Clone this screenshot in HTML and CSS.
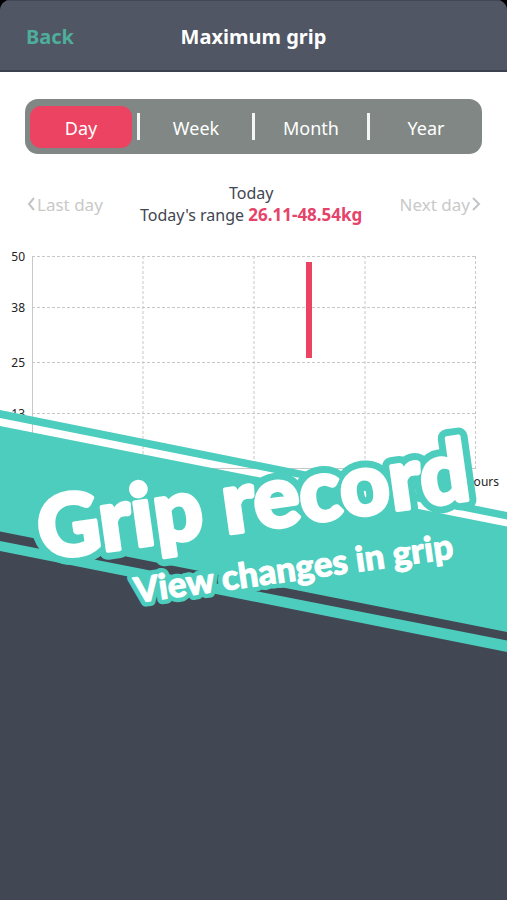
FILE: index.html
```html
<!DOCTYPE html>
<html lang="en">
<head>
<meta charset="utf-8">
<meta name="viewport" content="width=device-width, initial-scale=1">
<title>Maximum grip</title>
<link rel="stylesheet" href="styles.css">
</head>
<body>
<div class="app">
  <header class="topbar">
    <button class="back" type="button">Back</button>
    <h1 class="title">Maximum grip</h1>
  </header>
  <main class="panel">
    <nav class="tabs" aria-label="Period">
      <button class="tab active" type="button">Day</button>
      <span class="sep"></span>
      <button class="tab" type="button">Week</button>
      <span class="sep"></span>
      <button class="tab" type="button">Month</button>
      <span class="sep"></span>
      <button class="tab" type="button">Year</button>
    </nav>
    <section class="range">
      <button class="step" type="button"><svg class="chev" viewBox="0 0 10 14"><path d="M8 1 3 7l5 6"/></svg>Last day</button>
      <p class="summary">Today<br>Today's range <strong>26.11-48.54kg</strong></p>
      <button class="step" type="button">Next day<svg class="chev" viewBox="0 0 10 14"><path d="M2 1l6 6-6 6"/></svg></button>
    </section>
    <svg class="chart" viewBox="0 0 507 300" role="img" aria-label="Grip range by hour">
      <g class="grid">
        <path d="M32 28.5H476M32 79.5H476M32 134.5H476M32 185.5H476"/>
        <path d="M143 28V240M254 28V240M365 28V240M475.5 28V240"/>
      </g>
      <path class="axis" d="M32.5 28V240.5H476"/>
      <rect class="bar" x="306" y="34" width="6" height="96"/>
      <g class="ylabels">
        <text x="25" y="33">50</text>
        <text x="25" y="84">38</text>
        <text x="25" y="139">25</text>
        <text x="25" y="190">13</text>
      </g>
      <text class="xlabel" x="499" y="258">hours</text>
    </svg>
  </main>
  <svg class="ribbon" viewBox="0 0 507 900">
    <defs>
      <text id="headline" class="headline" transform="translate(42 560) rotate(-8)">Grip record</text>
      <text id="subline" class="subline" transform="translate(136 603) rotate(-8)">View changes in grip</text>
    </defs>
    <path class="teal" d="M0 410 507 512v7.500L0 418z"/>
    <path class="teal" d="M0 426 507 526.500V632L0 531.500z"/>
    <path class="teal" d="M0 541 507 640.500V652L0 551z"/>
    <use class="halo halo-large" href="#headline"/>
    <use class="halo halo-small" href="#subline"/>
    <use class="face face-large" href="#headline"/>
    <use class="face face-small" href="#subline"/>
  </svg>
</div>
</body>
</html>
```
FILE: styles.css
```css
* { box-sizing: border-box; }
body {
  margin: 0;
  background: #000;
  font-family: "Noto Sans", sans-serif;
  color: #414651;
}
button {
  border: 0;
  padding: 0;
  background: none;
  font: inherit;
  color: inherit;
}
.app {
  position: relative;
  min-height: 100vh;
  overflow: hidden;
  border-radius: 10px 10px 0 0;
  background: #414753;
}
.topbar {
  display: grid;
  grid-template-columns: 1fr auto 1fr;
  align-items: center;
  height: 72px;
  padding: 2px 26px 0;
  border-top: 1px solid #414753;
  border-bottom: 2px solid #3b414d;
  background: #505663;
}
.back {
  justify-self: start;
  font-size: 20px;
  font-weight: 700;
  color: #4eae9b;
}
.title {
  margin: 0;
  font-size: 20px;
  font-weight: 700;
  color: #fff;
}
.panel {
  padding-top: 27px;
  background: #fff;
}
.tabs {
  display: flex;
  align-items: center;
  gap: 5px;
  height: 55px;
  margin: 0 25px;
  padding: 0 5px;
  border-radius: 13px;
  background: #808784;
}
.tab {
  flex: 1;
  height: 42px;
  padding-top: 2px;
  border-radius: 11px;
  font-size: 18px;
  color: #fff;
}
.active { background: #ec4363; }
.sep {
  width: 3px;
  height: 27px;
  background: #f4f6f5;
}
.range {
  display: flex;
  align-items: center;
  justify-content: space-between;
  height: 74px;
  padding: 26px 26px 0;
}
.step {
  display: flex;
  align-items: center;
  gap: 1px;
  font-size: 17px;
  color: #c9c9c9;
}
.chev {
  width: 10px;
  height: 14px;
  fill: none;
  stroke: #c4c4c4;
  stroke-width: 2;
}
.summary {
  margin: 0;
  font-size: 16px;
  line-height: 22px;
  text-align: center;
}
.summary strong {
  font-size: 17px;
  line-height: 1;
  color: #e6436a;
}
.chart {
  display: block;
  width: 100%;
}
.grid {
  fill: none;
  stroke: #c8c8c8;
  stroke-width: 1;
  stroke-dasharray: 3 2;
}
.axis {
  fill: none;
  stroke: #c8c8c8;
}
.bar { fill: #ec4363; }
.ylabels, .xlabel {
  font-size: 12px;
  fill: #222;
  text-anchor: end;
}
.ribbon {
  position: absolute;
  top: 0;
  left: 0;
  width: 100%;
  pointer-events: none;
}
.teal { fill: #4dcdbd; }
.headline, .subline {
  font-family: Lato, sans-serif;
  font-weight: 900;
}
.headline { font-size: 86px; }
.subline { font-size: 35px; }
.halo {
  fill: #4dcdbd;
  stroke: #4dcdbd;
  stroke-linejoin: round;
}
.halo-large { stroke-width: 18px; }
.halo-small { stroke-width: 10px; }
.face {
  fill: #fff;
  stroke: #fff;
  stroke-linejoin: round;
}
.face-large { stroke-width: 4px; }
.face-small { stroke-width: 1px; }
```
